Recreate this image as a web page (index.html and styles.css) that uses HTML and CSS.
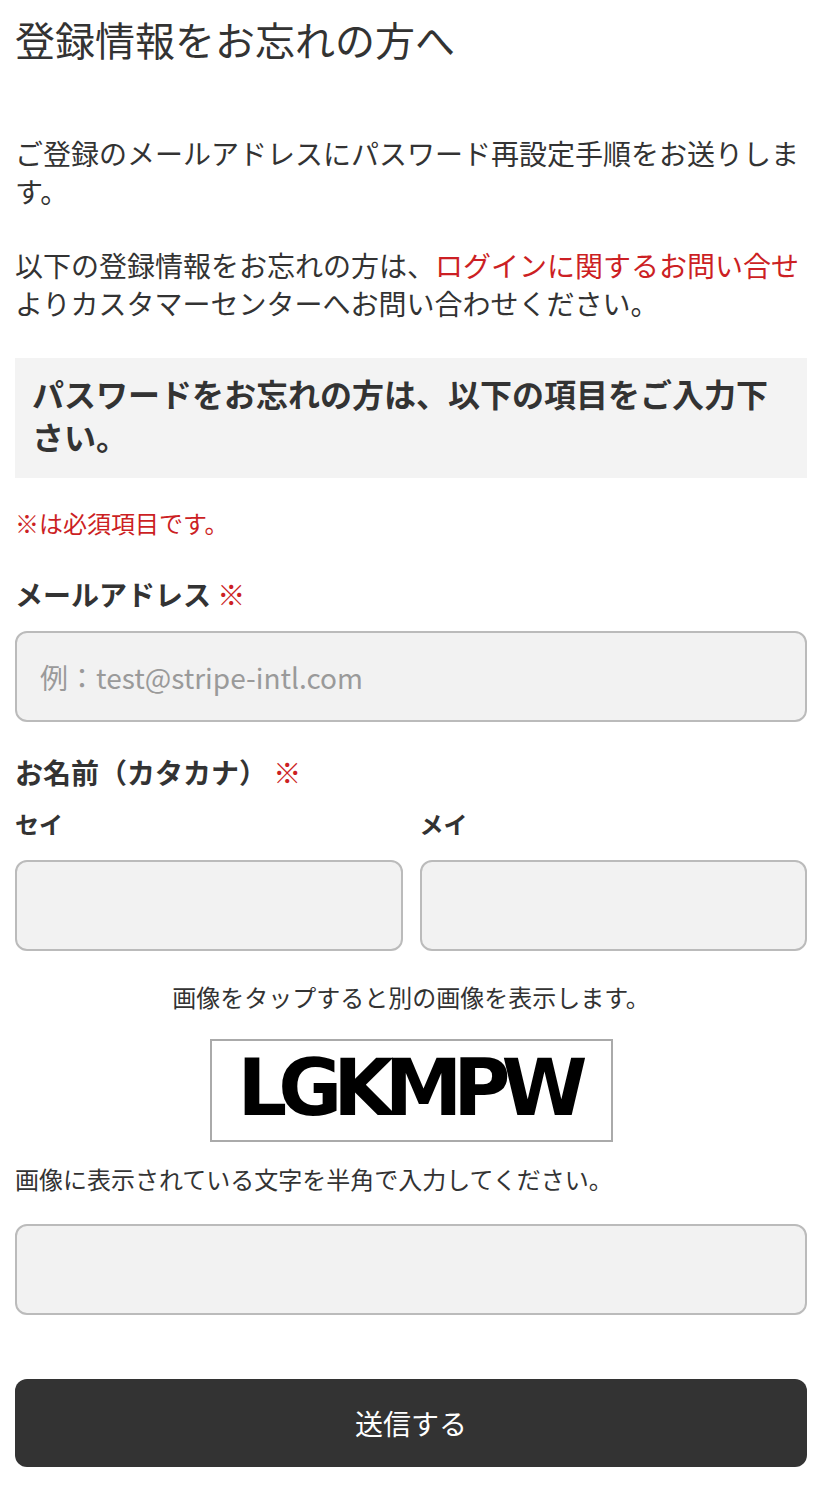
FILE: index.html
```html
<html>
<head>
<title>登録情報をお忘れの方へ</title>
<meta charset="utf-8"/>
<meta name="viewport" content="width=device-width, initial-scale=1"/>
<link rel="stylesheet" href="styles.css">
</head>
<body>

<div class="page">
  <h1 class="title">登録情報をお忘れの方へ</h1>

  <div class="intro">
    <p class="lead">ご登録のメールアドレスにパスワード再設定手順をお送りします。</p>
    <p class="lead">以下の登録情報をお忘れの方は、<a class="link" href="#">ログインに関するお問い合せ</a>よりカスタマーセンターへお問い合わせください。</p>
  </div>

  <h2 class="notice">パスワードをお忘れの方は、以下の項目をご入力下さい。</h2>

  <p class="required-note">※は必須項目です。</p>

  <form class="form" onsubmit="return false;">
    <label class="field">
      <span class="field-label">メールアドレス <em class="req">※</em></span>
      <input class="text-input" type="text" placeholder="例：test@stripe-intl.com" />
    </label>

    <div class="field field-name">
      <span class="field-label">お名前（カタカナ） <em class="req">※</em></span>
      <div class="name-row">
        <label class="name-col">
          <span class="sub-label">セイ</span>
          <input class="text-input" type="text" />
        </label>
        <label class="name-col">
          <span class="sub-label">メイ</span>
          <input class="text-input" type="text" />
        </label>
      </div>
    </div>

    <p class="captcha-hint">画像をタップすると別の画像を表示します。</p>
    <div class="captcha"><span class="captcha-text">LGKMPW</span></div>

    <label class="field field-captcha">
      <span class="captcha-help">画像に表示されている文字を半角で入力してください。</span>
      <input class="text-input" type="text" />
    </label>

    <button class="submit" type="submit">送信する</button>
  </form>
</div>

</body>
</html>
```

FILE: styles.css
```css
html, body {margin:0; padding:0;}
body {
 color: #333;
 background: #fff;
 font-family: "Noto Sans CJK JP", "Noto Sans", sans-serif;
}

.page {padding: 15px 18px 38px 15px;}

.title {
 margin: 0;
 font-size: 40px;
 line-height: 48px;
 font-weight: normal;
}

.intro {margin-top: 71px;}
.lead {
 margin: 0;
 font-size: 28px;
 line-height: 38px;
}
.lead + .lead {margin-top: 36px;}
.link {color: #cc1f24; text-decoration: none;}

.notice {
 margin: 36px 0 0;
 padding: 14px 17px 20px;
 background: #f3f3f3;
 font-size: 32px;
 line-height: 43px;
 font-weight: bold;
}

.required-note {
 margin: 28px 0 0;
 color: #cc1f24;
 font-size: 24px;
 line-height: 34px;
}

.form {margin-top: 34px;}
.field {display: block;}
.field-name {margin-top: 30px;}

.field-label {
 display: block;
 font-size: 28px;
 line-height: 40px;
 font-weight: bold;
}
.req {font-style: normal; color: #cc1f24; font-weight: normal;}

.text-input {
 display: block;
 width: 100%;
 height: 91px;
 box-sizing: border-box;
 margin: 17px 0 0;
 padding: 0 23px;
 border: 2px solid #bbb;
 border-radius: 12px;
 background: #f2f2f2;
 color: #333;
 font: 28px "Noto Sans CJK JP", "Noto Sans", sans-serif;
 outline: none;
}
.text-input::placeholder {color: #9a9a9a;}

.name-row {
 display: grid;
 grid-template-columns: 1fr 1fr;
 gap: 17px;
 margin-top: 15px;
}
.name-col {display: block;}
.sub-label {
 display: block;
 font-size: 24px;
 line-height: 34px;
 font-weight: bold;
}
.name-col .text-input {margin-top: 19px;}

.captcha-hint {
 margin: 29px 0 0;
 text-align: center;
 font-size: 24px;
 line-height: 34px;
}

.captcha {
 display: flex;
 align-items: center;
 justify-content: center;
 width: 403px;
 height: 103px;
 box-sizing: border-box;
 margin: 25px auto 0;
 border: 2px solid #aaa;
 background: #fff;
}
.captcha-text {
 margin: -6px 0 0 -6px;
 color: #000;
 font: bold 78px/1 "DejaVu Sans", sans-serif;
 letter-spacing: -9px;
}

.field-captcha {margin-top: 20px;}
.captcha-help {
 display: block;
 font-size: 24px;
 line-height: 34px;
}
.field-captcha .text-input {margin-top: 28px;}

.submit {
 display: block;
 width: 100%;
 height: 88px;
 margin-top: 64px;
 border: 0;
 border-radius: 12px;
 background: #333;
 color: #fff;
 font: 28px "Noto Sans CJK JP", "Noto Sans", sans-serif;
 cursor: pointer;
}
```
